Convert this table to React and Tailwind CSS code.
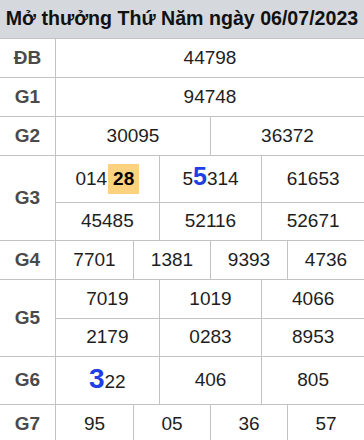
const rows = [
  { label: 'ĐB', lines: [[{ v: '44798' }]] },
  { label: 'G1', lines: [[{ v: '94748' }]] },
  { label: 'G2', lines: [[{ v: '30095' }, { v: '36372' }]] },
  {
    label: 'G3',
    heights: ['h-[46px]', 'h-[38px]'],
    lines: [
      [{ v: '014', hl: '28' }, { v: '314', big: '5', pre: '5' }, { v: '61653' }],
      [{ v: '45485' }, { v: '52116' }, { v: '52671' }],
    ],
  },
  { label: 'G4', lines: [[{ v: '7701' }, { v: '1381' }, { v: '9393' }, { v: '4736' }]] },
  {
    label: 'G5',
    lines: [
      [{ v: '7019' }, { v: '1019' }, { v: '4066' }],
      [{ v: '2179' }, { v: '0283' }, { v: '8953' }],
    ],
  },
  { label: 'G6', heights: ['h-[47px]'], lines: [[{ v: '22', big: '3', pre: '', large: true }, { v: '406' }, { v: '805' }]] },
  { label: 'G7', lines: [[{ v: '95' }, { v: '05' }, { v: '36' }, { v: '57' }]] },
];

const gridCls = {
  1: 'grid-cols-1',
  2: 'grid-cols-2',
  3: 'grid-cols-3',
  4: 'grid-cols-4',
};

function Cell({ c, first }) {
  return (
    <div
      className={`flex items-center justify-center ${first ? '' : 'border-l border-[#c3c3c3]'}`}
    >
      {c.hl ? (
        <span className="flex items-center">
          <span>{c.v}</span>
          <span className="ml-[1px] bg-[#fcd27f] font-bold text-black px-[5px] h-[30px] flex items-center">
            {c.hl}
          </span>
        </span>
      ) : c.big ? (
        <span className="flex items-baseline">
          {c.pre}
          <span
            className={`font-bold text-[#1f3fe6] leading-none ${c.large ? 'text-[28px]' : 'text-[25px]'}`}
          >
            {c.big}
          </span>
          {c.v}
        </span>
      ) : (
        c.v
      )}
    </div>
  );
}

export default function App() {
  return (
    <div className="w-[364px] h-[440px] overflow-hidden bg-white font-['Liberation_Sans',Arial,sans-serif] text-[#1e1e1e]">
      <div className="h-[38px] bg-[#d5d8dd] flex items-center justify-center text-[19.6px] font-bold text-[#111]">
        Mở thưởng Thứ Năm ngày 06/07/2023
      </div>
      {rows.map((r) => (
        <div key={r.label} className="flex border-t border-[#c3c3c3]">
          <div className="w-[56px] shrink-0 border-r border-[#c3c3c3] flex items-center justify-center text-[19px] font-bold text-[#4a4a4a]">
            {r.label}
          </div>
          <div className="flex-1 flex flex-col">
            {r.lines.map((line, i) => (
              <div
                key={i}
                className={`grid ${gridCls[line.length]} text-[19px] ${
                  (r.heights && r.heights[i]) || 'h-[38px]'
                } ${i > 0 ? 'border-t border-[#c3c3c3]' : ''}`}
              >
                {line.map((c, j) => (
                  <Cell key={j} c={c} first={j === 0} />
                ))}
              </div>
            ))}
          </div>
        </div>
      ))}
    </div>
  );
}
